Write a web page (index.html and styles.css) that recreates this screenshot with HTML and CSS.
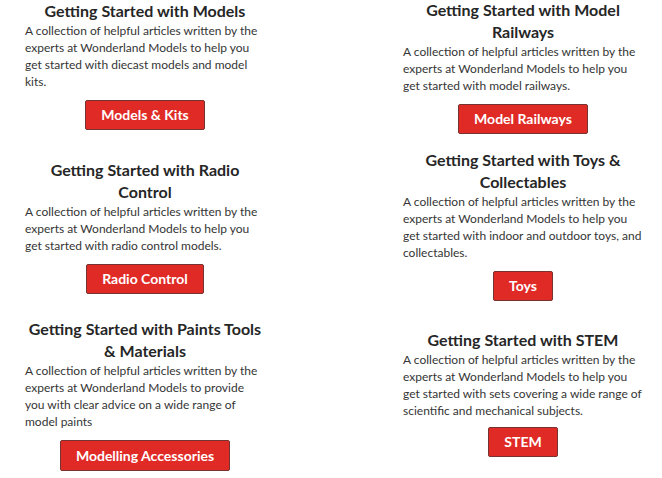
FILE: index.html
```html
<!DOCTYPE html>
<html lang="en">
<head>
<meta charset="utf-8">
<title>Getting Started Guides</title>
<link rel="stylesheet" href="styles.css">
</head>
<body>
<main class="guides">
  <div class="col">
    <section class="card c1">
      <h2 class="card-title">Getting Started with Models</h2>
      <p class="card-text">A collection of helpful articles written by the experts at Wonderland Models to help you get started with diecast models and model kits.</p>
      <div class="card-action"><a class="btn" href="#">Models &amp; Kits</a></div>
    </section>
    <section class="card c2">
      <h2 class="card-title">Getting Started with Radio Control</h2>
      <p class="card-text">A collection of helpful articles written by the experts at Wonderland Models to help you get started with radio control models.</p>
      <div class="card-action"><a class="btn" href="#">Radio Control</a></div>
    </section>
    <section class="card c3">
      <h2 class="card-title">Getting Started with Paints Tools &amp; Materials</h2>
      <p class="card-text">A collection of helpful articles written by the experts at Wonderland Models to provide you with clear advice on a wide range of model paints</p>
      <div class="card-action"><a class="btn" href="#">Modelling Accessories</a></div>
    </section>
  </div>
  <div class="col">
    <section class="card r1">
      <h2 class="card-title">Getting Started with Model Railways</h2>
      <p class="card-text">A collection of helpful articles written by the experts at Wonderland Models to help you get started with model railways.</p>
      <div class="card-action"><a class="btn" href="#">Model Railways</a></div>
    </section>
    <section class="card r2">
      <h2 class="card-title">Getting Started with Toys &amp; Collectables</h2>
      <p class="card-text">A collection of helpful articles written by the experts at Wonderland Models to help you get started with indoor and outdoor toys, and collectables.</p>
      <div class="card-action"><a class="btn" href="#">Toys</a></div>
    </section>
    <section class="card r3">
      <h2 class="card-title">Getting Started with STEM</h2>
      <p class="card-text">A collection of helpful articles written by the experts at Wonderland Models to help you get started with sets covering a wide range of scientific and mechanical subjects.</p>
      <div class="card-action"><a class="btn" href="#">STEM</a></div>
    </section>
  </div>
</main>
</body>
</html>
```

FILE: styles.css
```css
html, body {
  margin: 0;
  padding: 0;
  background: #ffffff;
}

body {
  font-family: Lato, "Liberation Sans", sans-serif;
  color: #333333;
  overflow: hidden;
}

.guides {
  display: grid;
  grid-template-columns: 240px 240px;
  column-gap: 138px;
  padding-left: 25px;
}

.col {
  display: flex;
  flex-direction: column;
}

.card-title {
  margin: 0;
  font-size: 16px;
  line-height: 22px;
  font-weight: 700;
  color: #262626;
  text-align: center;
}

.card-text {
  margin: 0;
  font-size: 12px;
  line-height: 17px;
  color: #353535;
}

.card-action {
  margin-top: 10px;
  text-align: center;
}

.btn {
  display: inline-block;
  padding: 6px 15px;
  font-size: 14px;
  line-height: 16px;
  font-weight: 700;
  color: #ffffff;
  text-decoration: none;
  background: #e02a26;
  border: 1px solid #763430;
  border-radius: 2px;
}

.c1 { margin-top: 0; }
.c2 { margin-top: 29px; }
.c3 { margin-top: 24px; }
.c3 .btn { padding-top: 7px; }

.r1 { margin-top: -1px; }
.r2 { margin-top: 15px; }
.r3 { margin-top: 28px; }
.r3 .card-action { margin-top: 8px; }
```
